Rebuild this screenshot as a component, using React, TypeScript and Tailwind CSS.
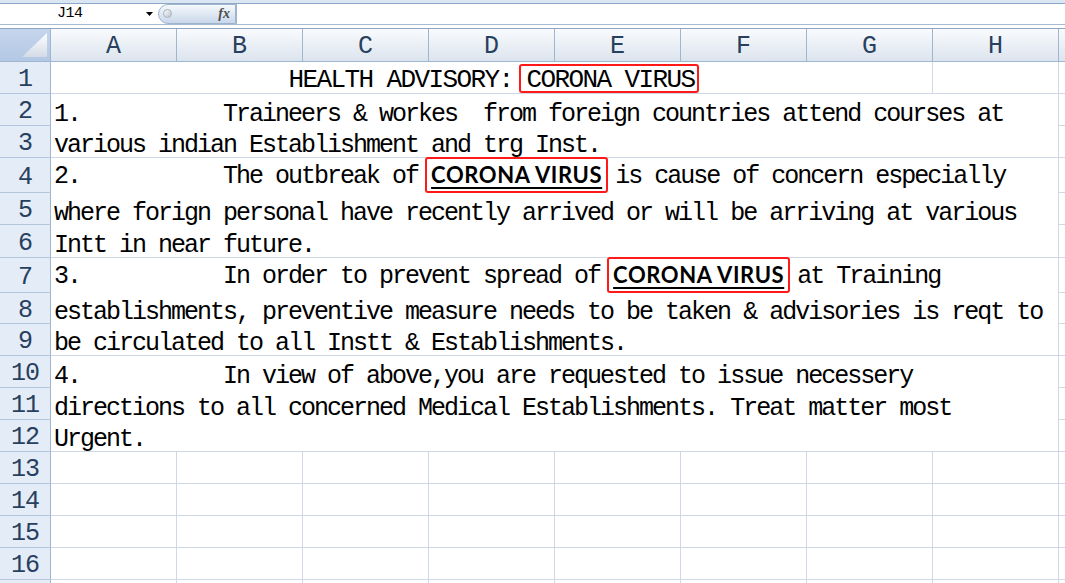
import React from "react";

type Seg = string | { bold: string };

type Block = {
  place: string;
  heights: number[];
  lines: Seg[][];
};

const cols = ["A", "B", "C", "D", "E", "F", "G", "H"];

// grid rows: header + sheet rows 1..17
const rowHeads = [
  { n: 1, cls: "row-[2]" },
  { n: 2, cls: "row-[3]" },
  { n: 3, cls: "row-[4]" },
  { n: 4, cls: "row-[5]" },
  { n: 5, cls: "row-[6]" },
  { n: 6, cls: "row-[7]" },
  { n: 7, cls: "row-[8]" },
  { n: 8, cls: "row-[9]" },
  { n: 9, cls: "row-[10]" },
  { n: 10, cls: "row-[11]" },
  { n: 11, cls: "row-[12]" },
  { n: 12, cls: "row-[13]" },
  { n: 13, cls: "row-[14]" },
  { n: 14, cls: "row-[15]" },
  { n: 15, cls: "row-[16]" },
  { n: 16, cls: "row-[17]" },
];

const colStarts = [
  "col-[2]",
  "col-[3]",
  "col-[4]",
  "col-[5]",
  "col-[6]",
  "col-[7]",
  "col-[8]",
  "col-[9]",
];

const blocks: Block[] = [
  {
    place: "row-[3/span_2]",
    heights: [32, 31],
    lines: [
      ["1.           Traineers & workes  from foreign countries attend courses at"],
      ["various indian Establishment and trg Inst."],
    ],
  },
  {
    place: "row-[5/span_3]",
    heights: [35, 32, 32],
    lines: [
      ["2.           The outbreak of ", { bold: "CORONA VIRUS" }, " is cause of concern especially"],
      ["where forign personal have recently arrived or will be arriving at various"],
      ["Intt in near future."],
    ],
  },
  {
    place: "row-[8/span_3]",
    heights: [35, 31, 31],
    lines: [
      ["3.           In order to prevent spread of ", { bold: "CORONA VIRUS" }, " at Training"],
      ["establishments, preventive measure needs to be taken & advisories is reqt to"],
      ["be circulated to all Instt & Establishments."],
    ],
  },
  {
    place: "row-[11/span_3]",
    heights: [32, 32, 31],
    lines: [
      ["4.           In view of above,you are requested to issue necessery"],
      ["directions to all concerned Medical Establishments. Treat matter most"],
      ["Urgent."],
    ],
  },
];

const emptyRows = ["row-[14]", "row-[15]", "row-[16]", "row-[17]", "row-[18]"];

const mono = "font-['Liberation_Mono',monospace]";

function Line({ segs, h }: { segs: Seg[]; h: number }) {
  const hasBold = segs.some((s) => typeof s !== "string");
  return (
    <div
      className={`flex items-end pl-[3px] ${hasBold ? "pb-[5px]" : ""}`}
      style={{ height: h }}
    >
      <div className={`${mono} text-[25px] leading-[22px] tracking-[-2px] text-black whitespace-pre`}>
        {segs.map((s, i) =>
          typeof s === "string" ? (
            <span key={i}>{s}</span>
          ) : (
            <span
              key={i}
              className="relative inline-block font-['Lato',sans-serif] font-bold text-[22px] leading-[22px] tracking-[0.6px] underline decoration-2 underline-offset-[4px]"
            >
              {s.bold}
              <span className="absolute -left-[6px] -right-[6px] -top-[7px] -bottom-[7px] rounded-[3px] border-2 border-[#ff1a1a]" />
            </span>
          )
        )}
      </div>
    </div>
  );
}

function FormulaBar() {
  return (
    <div className="bg-white">
      <div className="h-[3px] bg-[#dbe6f3]" />
      <div className="h-[1px] bg-[#8ea8c8]" />
      <div className="flex h-[21px] border-b border-[#a9bbd1]">
        <div className="relative w-[158px] flex items-center pl-[57px]">
          <span className={`${mono} text-[15px] tracking-[-0.5px] text-black`}>J14</span>
          <svg className="absolute left-[146px] top-[8px]" width="7" height="4" viewBox="0 0 7 4">
            <polygon points="0,0 7,0 3.5,4" fill="#000" />
          </svg>
        </div>
        <div className="relative flex w-[78px] items-center justify-end rounded-l-full border border-[#9fb3cb] bg-gradient-to-b from-[#f6f9fc] to-[#c8d7ea] pr-[5px]">
          <span className="absolute left-[4px] top-[4px] h-[9px] w-[9px] rounded-full border border-[#a7b2bf] bg-gradient-to-br from-[#ffffff] to-[#b9c2cc]" />
          <span className="font-['Liberation_Serif',serif] text-[14px] font-bold italic leading-none text-[#4d4d4d]">
            fx
          </span>
        </div>
        <div className="flex-1 border-l border-[#9fb3cb] bg-white" />
      </div>
      <div className="h-[4px] border-b border-[#8fa6c2] bg-white" />
    </div>
  );
}

export default function App() {
  const headText = `${mono} text-[25px] text-[#27405e]`;
  return (
    <div className="w-[1065px] h-[583px] overflow-hidden bg-white">
      <FormulaBar />
      <div className="grid grid-cols-[51px_126px_126px_126px_126px_126px_126px_126px_126px_1fr] grid-rows-[33px_32px_32px_32px_35px_32px_33px_35px_31px_32px_32px_32px_32px_32px_32px_32px_32px_32px]">
        {/* corner */}
        <div className="col-[1] row-[1] relative border-r border-b border-[#9eb6ce] bg-gradient-to-b from-[#c5d6ec] to-[#b3c8e5]">
          <svg className="absolute left-0 top-0" width="50" height="32" viewBox="0 0 50 32">
            <defs>
              <linearGradient id="tri" x1="0" y1="0" x2="0" y2="1">
                <stop offset="0" stopColor="#ffffff" />
                <stop offset="1" stopColor="#d3dbe6" />
              </linearGradient>
            </defs>
            <polygon points="47,4 47,28 22,28" fill="url(#tri)" />
          </svg>
        </div>
        {/* column headers */}
        {cols.map((c, i) => (
          <div
            key={c}
            className={`${colStarts[i]} row-[1] flex items-center justify-center pt-[4px] border-r border-b border-[#9eb6ce] bg-gradient-to-b from-[#f9fbfd] to-[#dce4ee] ${headText}`}
          >
            {c}
          </div>
        ))}
        <div className="col-[10] row-[1] border-b border-[#9eb6ce] bg-gradient-to-b from-[#f9fbfd] to-[#dce4ee]" />

        {/* row headers */}
        {rowHeads.map((r) => (
          <div
            key={r.n}
            className={`col-[1] ${r.cls} flex items-center justify-center pt-[5px] border-r border-b border-r-[#9eb6ce] border-b-[#b5c7dc] bg-[#e4ecf7] tracking-[-1px] ${headText}`}
          >
            {r.n}
          </div>
        ))}
        <div className="col-[1] row-[18] border-r border-[#9eb6ce] bg-[#e4ecf7]" />

        {/* row 1 */}
        <div className="col-[2/span_7] row-[2] flex items-end justify-center border-r border-b border-[#d0d7e5]">
          <div className={`${mono} text-[26px] leading-[26px] tracking-[-1.6px] text-black whitespace-pre`}>
            {"HEALTH ADVISORY: "}
            <span className="relative inline-block">
              CORONA VIRUS
              <span className="absolute -left-[8px] -right-[4px] -top-[3px] bottom-[0px] rounded-[3px] border-2 border-[#ff1a1a]" />
            </span>
          </div>
        </div>
        <div className="col-[9] row-[2] border-r border-b border-[#d0d7e5]" />
        <div className="col-[10] row-[2] border-b border-[#d0d7e5]" />

        {/* merged paragraphs */}
        {blocks.map((b, bi) => (
          <React.Fragment key={bi}>
            <div className={`col-[2/span_8] ${b.place} flex flex-col border-r border-b border-[#d0d7e5]`}>
              {b.lines.map((l, li) => (
                <Line key={li} segs={l} h={b.heights[li]} />
              ))}
            </div>
            <div className={`col-[10] ${b.place} flex flex-col`}>
              {b.heights.map((h, i) => (
                <div key={i} className="border-b border-[#d0d7e5]" style={{ height: h + (i === b.heights.length - 1 ? 1 : 0) }} />
              ))}
            </div>
          </React.Fragment>
        ))}

        {/* empty rows */}
        {emptyRows.map((r) => (
          <React.Fragment key={r}>
            {colStarts.map((c) => (
              <div key={c} className={`${c} ${r} border-r border-b border-[#d0d7e5]`} />
            ))}
            <div className={`col-[10] ${r} border-b border-[#d0d7e5]`} />
          </React.Fragment>
        ))}
      </div>
    </div>
  );
}
